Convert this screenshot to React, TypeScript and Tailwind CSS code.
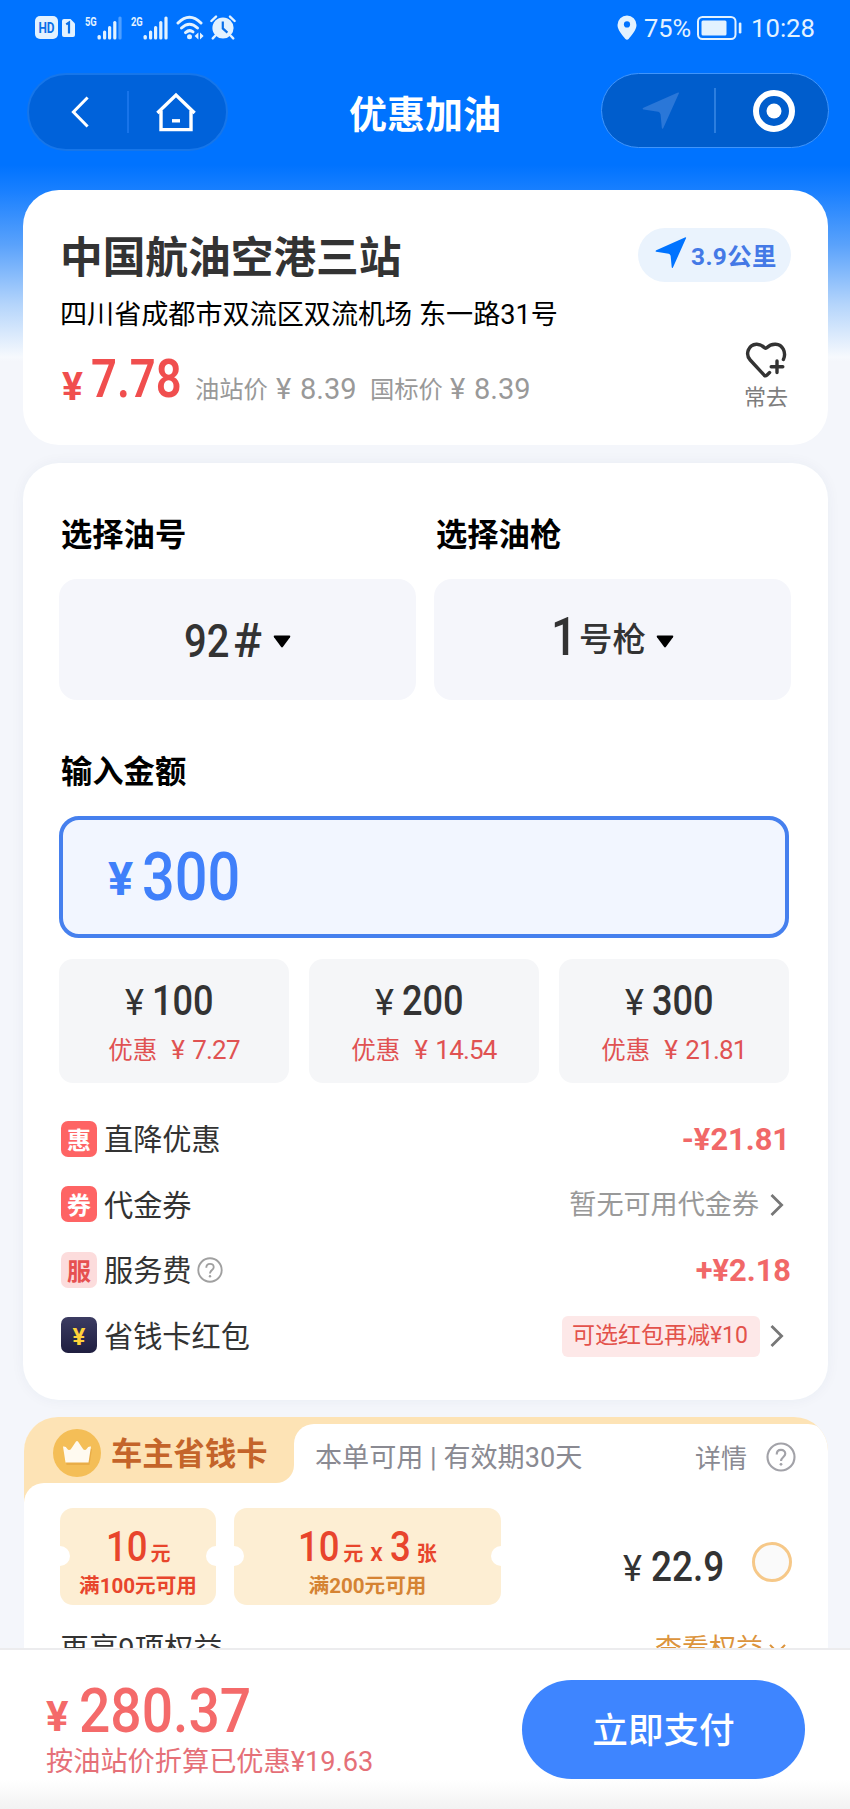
import type { ReactNode } from "react"
import { clsx } from "clsx"

const App = () => {
  return (
    <div className="flex h-[1809px] w-[850px] flex-col overflow-hidden bg-[#f4f6fb] font-['Roboto','Noto_Sans_CJK_SC',sans-serif] text-[#333]">
      <main className="flex min-h-0 flex-1 flex-col overflow-hidden bg-[linear-gradient(to_bottom,#0073ff_0,#0073ff_165px,#187fff_190px,#5aa2fb_245px,#b5d5fb_305px,#f6f9fd_357px,#f4f6fb_362px)]">
        <StatusBar />
        <NavBar />
        <StationCard />
        <OrderCard />
        <SavingCard />
      </main>
      <PayBar />
    </div>
  )
}

export default App

/*******************************************************/
/*  Helpers
/*******************************************************/

// Condensed figures, the width comes from the caller since the scale does not affect layout
const Digits = ({ className, children }: { className?: string; children: ReactNode }) => (
  <span
    className={clsx(
      "inline-block origin-left font-medium whitespace-nowrap",
      className
    )}
  >
    {children}
  </span>
)

const PlaneIcon = ({ className }: { className?: string }) => (
  <svg viewBox="0 0 36 36" className={className} fill="currentColor">
    <path d="M35 1.2 L20.2 34.2 Q19.4 35.6 18.8 34 L17.6 21.4 Q17.2 19.4 15.4 18.8 L1.4 16.6 Q-0.2 16 1.4 15 L33.6 0.6 Q35.4 0 35 1.2Z" />
  </svg>
)

const HelpIcon = ({ className }: { className?: string }) => (
  <svg viewBox="0 0 28 28" className={className} fill="none" stroke="currentColor">
    <circle cx="14" cy="14" r="12.6" strokeWidth="2" />
    <path
      d="M10 11.6 C10 9 11.6 7.4 14 7.4 C16.4 7.4 18 9 18 11 C18 13.8 14 14.2 14 17.8"
      strokeWidth="2"
    />
    <circle cx="14" cy="20.8" r="1.3" fill="currentColor" stroke="none" />
  </svg>
)

const ChevronIcon = ({ className }: { className?: string }) => (
  <svg viewBox="0 0 14 24" className={className} fill="none" stroke="currentColor">
    <path d="M1.5 2 L11.6 12 L1.5 22" strokeWidth="2.8" />
  </svg>
)

/*******************************************************/
/*  Header
/*******************************************************/

const Signal = ({ label, weak }: { label: string; weak?: boolean }) => (
  <div className="flex h-6 w-[38px] items-start">
    <span className="w-3 origin-left scale-x-[0.72] text-[13px] leading-[11px] font-bold">
      {label}
    </span>
    <svg viewBox="0 0 26 24" className="h-6 w-[26px] shrink-0" fill="currentColor">
      <rect x="0.5" y="19" width="3.4" height="4.5" rx="1.5" />
      <rect x="6" y="14.5" width="3.2" height="9" rx="1.5" />
      <rect x="11" y="10" width="3.2" height="13.5" rx="1.5" />
      <rect x="16.2" y="5" width="3.2" height="18.5" rx="1.5" />
      <rect
        x="21.4"
        y="0.5"
        width="3.2"
        height="23"
        rx="1.5"
        fillOpacity={weak ? 0.35 : 1}
      />
    </svg>
  </div>
)

const StatusBar = () => (
  <div className="flex h-[55px] shrink-0 items-center justify-between pr-9 pl-[35px] text-[#e3f2ff]">
    <div className="flex items-center">
      <span className="flex h-[23px] w-[23px] items-center justify-center rounded-[5px] bg-[#e3f2ff]">
        <span className="scale-x-[0.85] text-[14px] leading-none font-bold text-[#0a6fe8]">
          HD
        </span>
      </span>
      <svg viewBox="0 0 13 18" className="ml-1 h-[18px] w-[13px]">
        <path
          d="M2 0 H8.5 L13 4.5 V16 Q13 18 11 18 H2 Q0 18 0 16 V2 Q0 0 2 0Z"
          fill="currentColor"
        />
        <path d="M4.2 5.4 L7 3.6 V14.6" fill="none" stroke="#0a6fe8" strokeWidth="2.2" />
      </svg>
      <div className="ml-[10px]">
        <Signal label="5G" weak />
      </div>
      <div className="ml-2">
        <Signal label="2G" />
      </div>
      <svg
        viewBox="0 0 28 25"
        className="ml-[7px] h-[25px] w-7"
        fill="none"
        stroke="currentColor"
        strokeWidth="3"
        strokeLinecap="round"
      >
        <path d="M2 8 Q13.5 -3.5 25 8" />
        <path d="M5.5 13 Q13.5 5.5 21.5 13" />
        <path d="M9.5 17.6 Q13.5 14 17 16.8" />
        <circle cx="13.5" cy="21.8" r="2.5" fill="currentColor" stroke="none" />
        <path
          d="M22.4 17.6 V24.4 L18.6 21Z M24 17.6 V24.4 L27.6 21Z"
          fill="currentColor"
          stroke="none"
        />
      </svg>
      <svg viewBox="0 0 26 25" className="ml-[6px] h-[25px] w-[26px]" fill="none">
        <circle cx="13" cy="13" r="10.6" fill="currentColor" />
        <path
          d="M1.4 6 L6 1.6 M24.6 6 L20 1.6 M5 21 L2.8 23.4 M21 21 L23.2 23.4"
          stroke="currentColor"
          strokeWidth="2.4"
          strokeLinecap="round"
        />
        <path d="M12.8 6.4 V13.4 L17.4 17.6" stroke="#0a6fe8" strokeWidth="2.2" />
      </svg>
    </div>
    <div className="flex items-center">
      <svg viewBox="0 0 20 25" className="h-[25px] w-5">
        <path
          d="M10 0.5 a9.5 9.5 0 0 1 9.5 9.5 C19.5 15 14.5 20.5 11.6 24 Q10 25.4 8.4 24 C5.5 20.5 0.5 15 0.5 10 A9.5 9.5 0 0 1 10 0.5Z"
          fill="currentColor"
        />
        <circle cx="10" cy="9.4" r="3.1" fill="#0073ff" />
      </svg>
      <span className="ml-[7px] w-[49px] origin-left scale-x-[0.96] pt-[2px] text-[26.5px] leading-none">
        75%
      </span>
      <svg viewBox="0 0 45 24" className="ml-[4px] h-6 w-[45px]" fill="none">
        <rect
          x="1"
          y="1"
          width="37.5"
          height="22"
          rx="4.5"
          stroke="currentColor"
          strokeWidth="2"
        />
        <rect x="4.5" y="4.5" width="25" height="15" rx="1.5" fill="currentColor" />
        <rect x="41.8" y="6.5" width="2.6" height="11" rx="1.2" fill="currentColor" />
      </svg>
      <span className="ml-[9px] w-[63px] origin-left scale-x-[0.97] pt-[2px] text-[26.5px] leading-none">
        10:28
      </span>
    </div>
  </div>
)

const NavBar = () => (
  <header className="flex h-[135px] shrink-0 items-start pt-[18px] pr-[20px] pl-[27px] text-white">
    <div className="flex h-[78px] w-[201px] items-center rounded-full border-2 border-[#1676ea] bg-[#0062da]">
      <svg
        viewBox="0 0 18 32"
        className="ml-[42px] h-8 w-[18px]"
        fill="none"
        stroke="currentColor"
        strokeWidth="3"
      >
        <path d="M16.6 1.5 L2.4 16 L16.6 30.5" />
      </svg>
      <span className="ml-[38px] h-[42px] w-[2px] bg-[#1874ea]" />
      <svg
        viewBox="0 0 40 40"
        className="ml-[27px] h-10 w-10"
        fill="none"
        stroke="currentColor"
        strokeWidth="3.4"
      >
        <path d="M1.4 21 L20 3 L38.6 21" />
        <path d="M5 18.5 V37.6 H35 V18.5" />
        <path d="M16 28.8 H24" />
      </svg>
    </div>
    <h1 className="ml-[121px] w-[152px] pt-[14px] text-[38px] leading-[56px] font-bold whitespace-nowrap">
      优惠加油
    </h1>
    <div className="ml-[100px] flex h-[75px] w-[228px] items-center rounded-full border border-[#4095fb] bg-[#005dcc]">
      <PlaneIcon className="ml-[40px] h-[38px] w-[38px] text-[#2a77d8]" />
      <span className="ml-[34px] h-[45px] w-[2px] bg-[#2c7edf]" />
      <svg viewBox="0 0 42 42" className="ml-[37px] h-[42px] w-[42px]" fill="none">
        <circle cx="21" cy="21" r="18" stroke="currentColor" strokeWidth="6" />
        <circle cx="21" cy="21" r="7.5" fill="currentColor" />
      </svg>
    </div>
  </header>
)

/*******************************************************/
/*  Station
/*******************************************************/

const StationCard = () => (
  <section className="mr-[22px] ml-[23px] flex h-[255px] shrink-0 justify-between rounded-[36px] bg-white pr-[37px] pl-[37px]">
    <div className="flex flex-col">
      <h2 className="mt-[40px] text-[42.7px] leading-[56px] font-bold">中国航油空港三站</h2>
      <p className="mt-[9px] text-[27.1px] leading-[40px] whitespace-pre text-black">
        四川省成都市双流区双流机场 东一路31号
      </p>
      <div className="mt-[12px] flex h-[64px] items-baseline leading-[64px] text-[#999]">
        <span className="ml-[2px] w-[29px] translate-y-[3px] text-[39px] font-bold text-[#f04e4e]">
          ¥
        </span>
        <Digits className="w-[104px] scale-x-[0.84] text-[54px] font-semibold text-[#f04e4e]">
          7.78
        </Digits>
        <span className="w-[81px] translate-y-[1px] text-[24.3px]">油站价</span>
        <span className="w-[24px] translate-y-[2px] text-[29px]">¥</span>
        <span className="w-[70px] translate-y-[2px] text-[29px]">8.39</span>
        <span className="w-[80px] translate-y-[1px] text-[24.3px]">国标价</span>
        <span className="w-[24px] translate-y-[2px] text-[29px]">¥</span>
        <span className="translate-y-[2px] text-[29px]">8.39</span>
      </div>
    </div>
    <div className="flex flex-col items-end">
      <div className="mt-[38px] flex h-[54px] w-[153px] items-center rounded-full bg-[#eaf3fd] pl-[17px] text-[#4479e6]">
        <PlaneIcon className="mb-[5px] h-[34px] w-[32px] text-[#0073ff]" />
        <span className="ml-[4px] pt-[4px] text-[24.4px] leading-[34px] font-bold tracking-[0.4px]">
          3.9公里
        </span>
      </div>
      <div className="mt-[59px] mr-[3px] flex flex-col items-center">
        <svg
          viewBox="0 0 42 38"
          className="h-[38px] w-[42px]"
          fill="none"
          stroke="#333"
          strokeWidth="3.4"
          strokeLinecap="round"
          strokeLinejoin="round"
        >
          <path d="M38.4 18.5 C41.6 11.5 37.6 3.4 30.6 3.2 C26.6 3 23.6 4.8 21.4 7 Q20.6 7.6 19.8 7 C17.4 4.6 14.6 3 11.4 3.2 C3.6 3.6 -0.2 13 5.2 19 L19.2 34.2 Q20.4 35.4 21.8 34.2 L24.6 31.6" />
          <path d="M32 20 V31.6 M26.2 25.8 H37.8" />
        </svg>
        <span className="mt-[4px] text-[22px] leading-[30px] text-[#7d7d7d]">常去</span>
      </div>
    </div>
  </section>
)

/*******************************************************/
/*  Order
/*******************************************************/

const presets = [
  { amount: "100", discount: "7.27" },
  { amount: "200", discount: "14.54" },
  { amount: "300", discount: "21.81" },
]

const Caret = ({ className }: { className?: string }) => (
  <svg viewBox="0 0 18 13" className={clsx("h-[13px] w-[18px]", className)}>
    <path d="M1.5 0.5 H16.5 Q18 0.8 17 2.2 L10 11.8 Q9 13 8 11.8 L1 2.2 Q0 0.8 1.5 0.5Z" />
  </svg>
)

const OrderCard = () => (
  <section className="mt-[18px] mr-[22px] ml-[23px] flex h-[937px] shrink-0 flex-col rounded-[36px] bg-white pr-[39px] pl-9 shadow-[0_0_14px_rgba(40,60,100,0.05)]">
    <div className="-mr-[2px] grid grid-cols-2 gap-[18px]">
      <div>
        <Heading className="mt-[52px]">选择油号</Heading>
        <div className="mt-[22px] flex h-[121px] items-center rounded-[18px] bg-[#f5f6fb] pt-[3px] pl-[125px]">
          <Digits className="w-[49px] scale-x-[0.85] text-[47px] leading-[56px]">
            92
          </Digits>
          <span className="w-[31px] text-[48px] leading-[56px] font-medium">#</span>
          <Caret className="ml-[9px]" />
        </div>
      </div>
      <div>
        <Heading className="mt-[52px]">选择油枪</Heading>
        <div className="mt-[22px] flex h-[121px] items-center rounded-[18px] bg-[#f5f6fb] pt-[3px] pl-[117px]">
          <Digits className="w-[28px] scale-x-[0.85] pb-[8px] text-[54px] leading-[56px]">
            1
          </Digits>
          <span className="pb-[2px] text-[33.5px] leading-[48px] font-medium">号枪</span>
          <Caret className="ml-[10px]" />
        </div>
      </div>
    </div>
    <Heading className="mt-[52px]">输入金额</Heading>
    <div className="mt-[22px] flex h-[122px] shrink-0 items-baseline rounded-[20px] border-4 border-[#4680ee] bg-[#f2f6ff] pl-[45px] leading-[114px] text-[#4080fa]">
      <span className="w-[34px] -translate-y-[5px] text-[47px] font-bold">¥</span>
      <Digits className="scale-x-[0.86] text-[67px]">300</Digits>
    </div>
    <div className="mt-[21px] flex justify-between">
      {presets.map(preset => (
        <div
          key={preset.amount}
          className="flex h-[124px] w-[230px] flex-col items-center rounded-[14px] bg-[#f5f6f8]"
        >
          <div className="mt-[16px] flex h-[52px] items-baseline leading-[52px]">
            <span className="w-[27px] text-[36px]">¥</span>
            <Digits className="w-[71px] scale-x-[0.86] text-[42px]">
              {preset.amount}
            </Digits>
          </div>
          <div className="mt-[5px] flex items-baseline text-[24.5px] leading-[36px] text-[#e05252]">
            <span>优惠</span>
            <span className="ml-[14px] w-[21px] text-[26px]">¥</span>
            <span className="text-[26px] tracking-[-0.8px]">{preset.discount}</span>
          </div>
        </div>
      ))}
    </div>
    <div className="mt-[23px] flex flex-col">
      <FeeRow badge="惠" badgeClassName="bg-[#fe6464] text-white" label="直降优惠">
        <span className="-mr-[1px] text-[30.8px] font-bold text-[#f16868]">-¥21.81</span>
      </FeeRow>
      <FeeRow badge="券" badgeClassName="bg-[#fe6464] text-white" label="代金券">
        <span className="text-[27.1px] text-[#999]">暂无可用代金券</span>
        <ChevronIcon className="mr-[5px] ml-[11px] h-6 w-[14px] text-[#777]" />
      </FeeRow>
      <FeeRow
        badge="服"
        badgeClassName="bg-[#fcdcdc] text-[#e65050]"
        label="服务费"
        extra={<HelpIcon className="ml-[5px] h-[26px] w-[26px] text-[#a0a0a0]" />}
      >
        <span className="-mr-[2px] text-[30.8px] font-bold text-[#f16868]">+¥2.18</span>
      </FeeRow>
      <FeeRow
        badge="¥"
        badgeClassName="bg-linear-to-b from-[#3c3c62] to-[#1f1e40] text-[#ffd23a]"
        label="省钱卡红包"
      >
        <span className="flex h-[41px] w-[198px] items-center justify-center rounded-[6px] bg-[#fde8e8] pr-[2px] text-[23px] text-[#e3524b]">
          可选红包再减¥10
        </span>
        <ChevronIcon className="mr-[5px] ml-[10px] h-6 w-[14px] text-[#777]" />
      </FeeRow>
    </div>
  </section>
)

const Heading = ({ className, children }: { className?: string; children: ReactNode }) => (
  <h3
    className={clsx(
      "shrink-0 pl-[2px] text-[31.3px] leading-[42px] font-bold text-black",
      className
    )}
  >
    {children}
  </h3>
)

type FeeRowProps = {
  badge: string
  badgeClassName: string
  label: string
  extra?: ReactNode
  children: ReactNode
}

const FeeRow = ({ badge, badgeClassName, label, extra, children }: FeeRowProps) => (
  <div className="flex h-[65.5px] items-center justify-between pl-[2px]">
    <div className="flex items-center">
      <span
        className={clsx(
          "flex h-9 w-9 items-center justify-center rounded-[7px] pt-[4px] text-[24px] leading-none font-bold",
          badgeClassName
        )}
      >
        {badge}
      </span>
      <span className="ml-[7px] pt-[3px] text-[29.2px] leading-[42px]">{label}</span>
      {extra}
    </div>
    <div className="flex items-center pt-[2px] leading-[40px]">{children}</div>
  </div>
)

/*******************************************************/
/*  Saving card
/*******************************************************/

const Coupon = ({ className, children }: { className?: string; children: ReactNode }) => (
  <div
    className={clsx(
      "relative flex h-[97px] shrink-0 flex-col items-center overflow-hidden rounded-[13px] bg-[#fdeed3]",
      className
    )}
  >
    <span className="absolute top-[38px] -left-[10px] h-5 w-5 rounded-full bg-white" />
    <span className="absolute top-[38px] -right-[10px] h-5 w-5 rounded-full bg-white" />
    {children}
  </div>
)

const SavingCard = () => (
  <section className="mt-[17px] mr-[22px] ml-6 flex shrink-0 flex-col overflow-hidden rounded-t-[34px] bg-[#fde3b5] pt-[7px]">
    <div className="flex h-[59px]">
      <div className="w-[270px] bg-white">
        <div className="flex h-full items-center rounded-br-[18px] bg-[#fde3b5] pl-[29px]">
          <svg viewBox="0 0 48 48" className="-mt-[2px] h-12 w-12">
            <circle cx="24" cy="24" r="24" fill="#f4be57" />
            <path
              d="M12.5 34.5 L10 18.5 Q13 18 14 20.5 Q16.5 24 19 19.5 L23 13.2 Q24 12 25 13.2 L29 19.5 Q31.5 24 34 20.5 Q35 18 38 18.5 L35.5 34.5Z"
              fill="#db9a35"
              opacity="0.45"
              transform="translate(1 1.5)"
            />
            <path
              d="M12.5 33.5 L10 17.5 Q13 17 14 19.5 Q16.5 23 19 18.5 L23 12.6 Q24 11.4 25 12.6 L29 18.5 Q31.5 23 34 19.5 Q35 17 38 17.5 L35.5 33.5Z"
              fill="#fffaf0"
            />
          </svg>
          <span className="ml-[10px] pt-[2px] text-[31.3px] leading-[40px] font-bold text-[#c4642a]">
            车主省钱卡
          </span>
        </div>
      </div>
      <div className="flex flex-1 items-center rounded-tl-[20px] rounded-tr-[20px] bg-white pr-8 pl-[21px] text-[27.1px] leading-[40px] text-[#8a8a92]">
        <span className="pt-[9px] whitespace-pre">本单可用 | 有效期30天</span>
        <span className="ml-auto pt-[11px] text-[26px]">详情</span>
        <HelpIcon className="mt-[6px] ml-[19px] h-[30px] w-[30px] text-[#a2a2a8]" />
      </div>
    </div>
    <div className="flex h-[180px] flex-col rounded-tl-[20px] bg-white pt-[25px] pr-9 pl-9">
      <div className="flex">
        <Coupon className="w-[156px] text-[#e8452c]">
          <div className="mt-[15px] flex h-[48px] items-baseline leading-[48px]">
            <Digits className="w-[45px] scale-x-[0.87] text-[42px]">10</Digits>
            <span className="text-[20px] font-bold">元</span>
          </div>
          <span className="mt-[2px] text-[20.6px] leading-[26px] font-bold">
            满100元可用
          </span>
        </Coupon>
        <Coupon className="ml-[18px] w-[267px] text-[#e8452c]">
          <div className="mt-[15px] flex h-[48px] items-baseline leading-[48px]">
            <Digits className="w-[45px] scale-x-[0.87] text-[42px]">10</Digits>
            <span className="text-[20px] font-bold">元</span>
            <span className="mx-[7px] text-[25px] font-medium">x</span>
            <Digits className="w-[27px] scale-x-[0.87] text-[42px]">3</Digits>
            <span className="text-[20px] font-bold">张</span>
          </div>
          <span className="mt-[2px] text-[20.6px] leading-[26px] font-bold text-[#d58333]">
            满200元可用
          </span>
        </Coupon>
        <div className="ml-[122px] flex h-[56px] items-baseline pt-[31px] leading-[56px]">
          <span className="w-[28px] text-[36px]">¥</span>
          <Digits className="scale-x-[0.88] text-[42px]">22.9</Digits>
        </div>
        <span className="mt-[34px] ml-auto h-[40px] w-[40px] shrink-0 rounded-full border-[3.5px] border-[#f6c888] bg-[#fafafa]" />
      </div>
      <div className="mt-[24px] flex items-start justify-between pr-[9px]">
        <span className="text-[29.2px] leading-[40px]">再享9项权益</span>
        <span className="flex items-center text-[27px] leading-[40px] text-[#dc943c]">
          查看权益
          <ChevronIcon className="ml-[9px] h-[18px] w-[11px] rotate-90" />
        </span>
      </div>
    </div>
  </section>
)

/*******************************************************/
/*  Pay bar
/*******************************************************/

const PayBar = () => (
  <footer className="flex h-[161px] shrink-0 justify-between border-t-2 border-[#ececee] bg-[linear-gradient(to_bottom,#fff_0,#fff_130px,#f1f1f1_161px)] pr-[45px] pl-[46px] text-[#f46a6a]">
    <div>
      <div className="mt-[26px] flex h-[70px] items-baseline leading-[70px]">
        <span className="w-[33px] -translate-y-[1px] text-[42px] font-bold">¥</span>
        <Digits className="scale-x-[0.89] text-[62px]">280.37</Digits>
      </div>
      <p className="mt-[-4px] text-[27.2px] leading-[40px] text-[#e57078]">
        按油站价折算已优惠¥19.63
      </p>
    </div>
    <button className="mt-[30px] h-[99px] w-[283px] rounded-full bg-[#3e85ff] pt-[4px] text-[35.6px] font-medium text-white">
      立即支付
    </button>
  </footer>
)
